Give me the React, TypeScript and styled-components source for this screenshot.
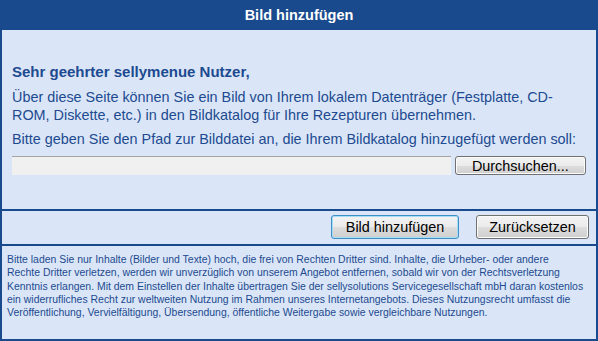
import React from "react";
import styled, { createGlobalStyle } from "styled-components";

const GlobalStyle = createGlobalStyle`
  html, body {
    margin: 0;
    padding: 0;
    background: #ffffff;
  }
  body {
    font-family: "Liberation Sans", Arial, sans-serif;
  }
`;

const BLUE = "#194a8d";
const TEXT = "#1d4a90";

function App() {
  return (
    <>
      <GlobalStyle />
      <DialogStyled>
        <Header>Bild hinzufügen</Header>
        <Intro>
          <Greeting>Sehr geehrter sellymenue Nutzer,</Greeting>
          <Paragraph>
            Über diese Seite können Sie ein Bild von Ihrem lokalem Datenträger
            (Festplatte, CD-ROM, Diskette, etc.) in den Bildkatalog für Ihre
            Rezepturen übernehmen.
          </Paragraph>
          <Paragraph>
            Bitte geben Sie den Pfad zur Bilddatei an, die Ihrem Bildkatalog
            hinzugefügt werden soll:
          </Paragraph>
          <FileRow>
            <FileInput type="text" readOnly />
            <Button type="button" $width={133} $height={19}>
              Durchsuchen...
            </Button>
          </FileRow>
        </Intro>
        <Actions>
          <Button type="button" $width={128} $height={24} $focused>
            Bild hinzufügen
          </Button>
          <Button type="button" $width={113} $height={24}>
            Zurücksetzen
          </Button>
        </Actions>
        <Notice>
          Bitte laden Sie nur Inhalte (Bilder und Texte) hoch, die frei von
          Rechten Dritter sind. Inhalte, die Urheber- oder andere Rechte Dritter
          verletzen, werden wir unverzüglich von unserem Angebot entfernen,
          sobald wir von der Rechtsverletzung Kenntnis erlangen. Mit dem
          Einstellen der Inhalte übertragen Sie der sellysolutions
          Servicegesellschaft mbH daran kostenlos ein widerrufliches Recht zur
          weltweiten Nutzung im Rahmen unseres Internetangebots. Dieses
          Nutzungsrecht umfasst die Veröffentlichung, Vervielfältigung,
          Übersendung, öffentliche Weitergabe sowie vergleichbare Nutzungen.
        </Notice>
      </DialogStyled>
    </>
  );
}

const DialogStyled = styled.div`
  width: 598px;
  height: 341px;
  box-sizing: border-box;
  border: 2px solid ${BLUE};
  border-top: none;
  background: #dae6f7;
  display: flex;
  flex-direction: column;
  color: ${TEXT};
`;

const Header = styled.div`
  height: 30px;
  margin: 0 -2px;
  background: ${BLUE};
  color: #ffffff;
  font-weight: bold;
  font-size: 14.5px;
  display: flex;
  align-items: center;
  justify-content: center;
`;

const Intro = styled.div`
  height: 181px;
  box-sizing: border-box;
  padding: 33px 10px 0 10px;
  border-bottom: 2px solid ${BLUE};
`;

const Greeting = styled.h4`
  margin: 0 0 7px 0;
  font-size: 15px;
  font-weight: bold;
  line-height: 18px;
`;

const Paragraph = styled.p`
  margin: 0 0 6px 0;
  font-size: 14.4px;
  line-height: 18px;
`;

const FileRow = styled.div`
  display: flex;
  align-items: center;
  gap: 4px;
  margin-top: 8px;
`;

const FileInput = styled.input`
  width: 444px;
  height: 19px;
  box-sizing: border-box;
  margin: 0;
  border: none;
  border-top: 1px solid #a3a3a3;
  background: #f0f0f0;
  outline: none;
`;

const Button = styled.button<{ $width: number; $height: number; $focused?: boolean }>`
  width: ${(p) => p.$width}px;
  height: ${(p) => p.$height}px;
  box-sizing: border-box;
  margin: 0;
  padding: 0;
  border: 1px solid ${(p) => (p.$focused ? "#3d8fc6" : "#707070")};
  border-radius: 3px;
  background: linear-gradient(to bottom, #f3f3f3 0%, #ebebeb 50%, #dddddd 51%, #cfcfcf 100%);
  box-shadow: inset 0 0 0 1px ${(p) => (p.$focused ? "#a6dcf5" : "#fbfbfb")};
  font-family: "Liberation Sans", Arial, sans-serif;
  font-size: 14.4px;
  color: #000000;
  cursor: pointer;
`;

const Actions = styled.div`
  height: 35px;
  box-sizing: border-box;
  padding: 4px 7px 0 0;
  border-bottom: 2px solid ${BLUE};
  display: flex;
  justify-content: flex-end;
  align-items: flex-start;
  gap: 17px;
`;

const Notice = styled.div`
  flex: 1;
  padding: 7px 12px 0 5px;
  font-size: 10.45px;
  line-height: 13.3px;
`;

export default App;
